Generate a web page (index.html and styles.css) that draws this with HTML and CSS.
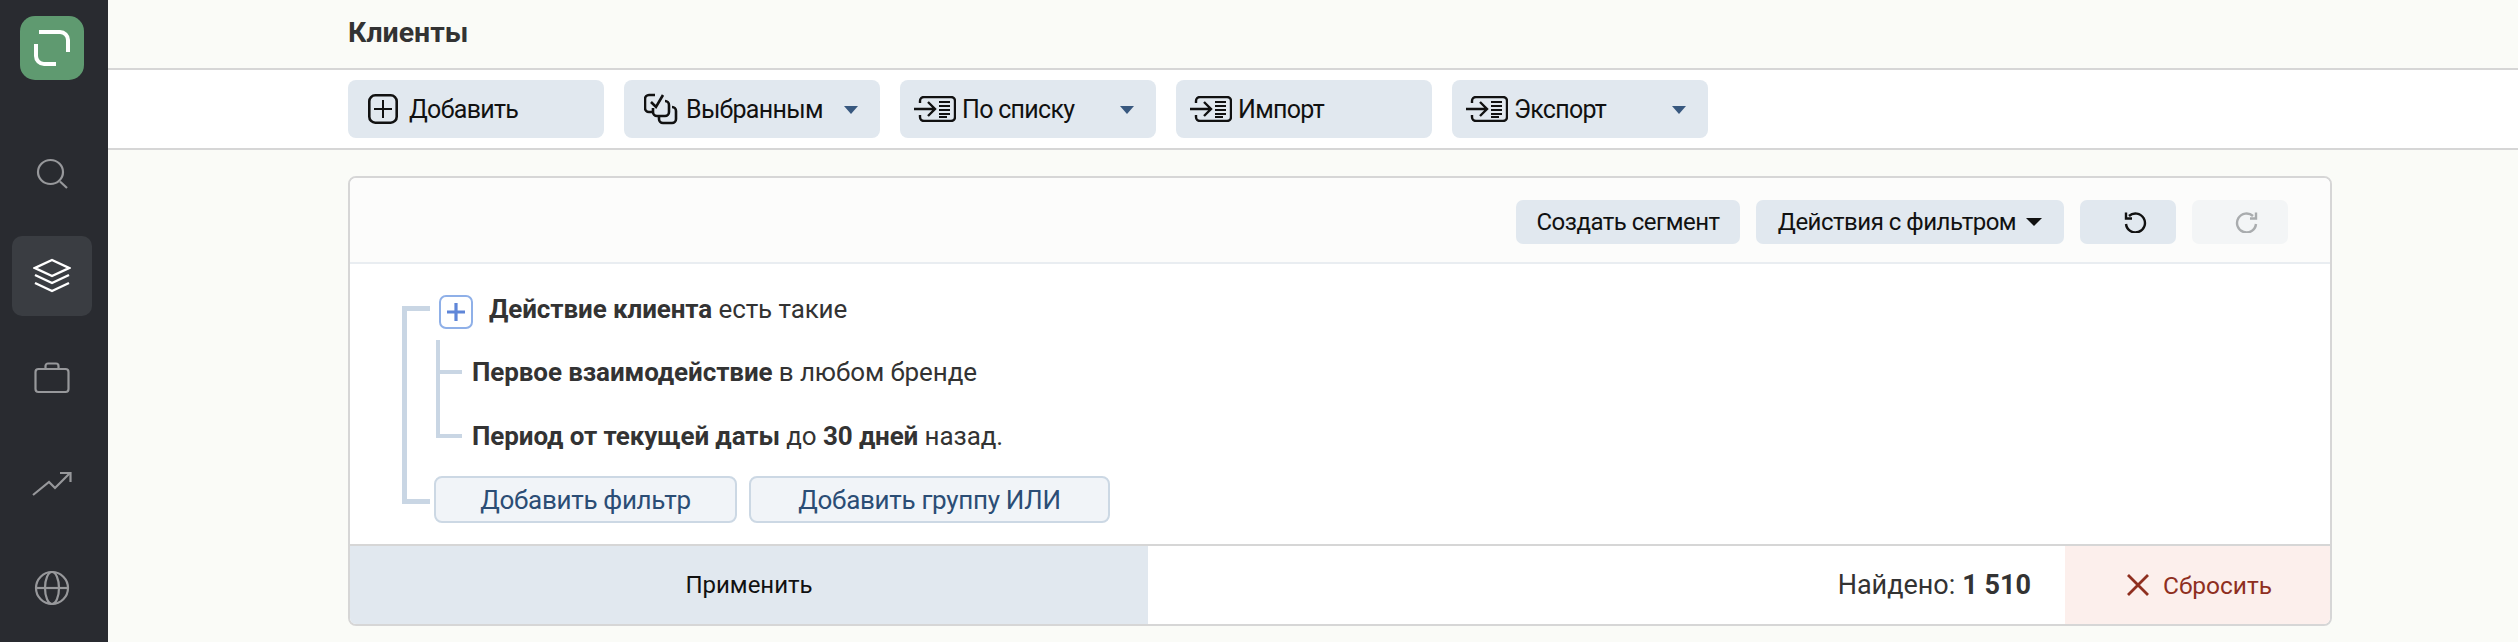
FILE: index.html
```html
<!DOCTYPE html>
<html lang="ru">
<head>
  <meta charset="UTF-8">
  <title>Клиенты</title>
  <link rel="stylesheet" href="styles.css">
</head>
<body>
<div class="app">
  <nav class="side-menu">
    <div class="side-logo">
      <svg width="40" height="36" viewBox="0 0 40 36" fill="none" stroke="#fff" stroke-width="4">
        <path d="M7 2H28a8 8 0 0 1 8 8V22"/>
        <path d="M4 14V26a8 8 0 0 0 8 8H24"/>
      </svg>
    </div>
    <a class="side-item">
      <svg width="34" height="34" viewBox="0 0 34 34" fill="none" stroke="#97989b" stroke-width="2.2">
        <ellipse cx="15.5" cy="14" rx="12.5" ry="12"/>
        <path d="M25 23.5l7 6.5"/>
      </svg>
    </a>
    <a class="side-item side-item-active">
      <svg width="38" height="36" viewBox="0 0 38 36" fill="none" stroke="#fff" stroke-width="2.4">
        <path d="M19 2L36 10 19 18 2 10Z"/>
        <path d="M2 17L19 25 36 17"/>
        <path d="M2 25L19 33 36 25"/>
      </svg>
    </a>
    <a class="side-item">
      <svg width="36" height="32" viewBox="0 0 36 32" fill="none" stroke="#97989b" stroke-width="2.2">
        <rect x="1.5" y="7" width="33" height="23" rx="3"/>
        <path d="M11.5 7V4a2.500 2.500 0 0 1 2.500-2.500h8a2.500 2.500 0 0 1 2.500 2.500V7"/>
      </svg>
    </a>
    <a class="side-item side-item-trend">
      <svg width="40" height="26" viewBox="0 0 40 26" fill="none" stroke="#97989b" stroke-width="2.2">
        <path d="M1 24L17 11 23 17 38 2"/>
        <path d="M28 2H38.500V11"/>
      </svg>
    </a>
    <a class="side-item side-item-globe">
      <svg width="36" height="36" viewBox="0 0 36 36" fill="none" stroke="#97989b" stroke-width="2.2">
        <circle cx="18" cy="18" r="16"/>
        <ellipse cx="18" cy="18" rx="7" ry="16"/>
        <path d="M2 18H34"/>
      </svg>
    </a>
  </nav>

  <main class="content">
    <header class="page-header"><h1 class="page-title">Клиенты</h1></header>

    <div class="toolbar">
      <button class="tool-btn">
        <svg class="tool-icon" width="30" height="30" viewBox="0 0 30 30" fill="none" stroke="#111" stroke-width="2.600">
          <rect x="1.300" y="1.300" width="27.400" height="27.400" rx="6"/>
          <path d="M15 6V24M6 15H24" stroke-width="2"/>
        </svg>
        <span class="tool-label">Добавить</span>
      </button>
      <button class="tool-btn">
        <svg class="tool-icon tool-icon-check" width="34" height="32" viewBox="0 0 34 32" fill="none" stroke="#111" stroke-width="2.600">
          <path d="M9 19H5a4 4 0 0 1-4-4V6a4 4 0 0 1 4-4H11"/>
          <path d="M7 9l5 5 7-12"/>
          <path d="M21 8a4 4 0 0 1 4 4V19a4 4 0 0 1-4 4H13a4 4 0 0 1-4-4V15"/>
          <path d="M28 14a4 4 0 0 1 4 4V26a4 4 0 0 1-4 4H19a4 4 0 0 1-4-4V24"/>
        </svg>
        <span class="tool-label">Выбранным</span>
        <span class="caret"></span>
      </button>
      <button class="tool-btn tool-btn-wide-icon">
        <svg class="tool-icon" width="42" height="26" viewBox="0 0 42 26" fill="none" stroke="#111" stroke-width="2.400">
          <path d="M6 7V5a4 4 0 0 1 4-4H37a4 4 0 0 1 4 4V21a4 4 0 0 1-4 4H10a4 4 0 0 1-4-4V19"/>
          <path d="M0 13H20M14 6l7 7-7 7"/>
          <path d="M25 6H36M25 10H36M25 14H36M25 18H36M25 21H33" stroke-width="1.800"/>
        </svg>
        <span class="tool-label">По списку</span>
        <span class="caret"></span>
      </button>
      <button class="tool-btn tool-btn-wide-icon">
        <svg class="tool-icon" width="42" height="26" viewBox="0 0 42 26" fill="none" stroke="#111" stroke-width="2.400">
          <path d="M6 7V5a4 4 0 0 1 4-4H37a4 4 0 0 1 4 4V21a4 4 0 0 1-4 4H10a4 4 0 0 1-4-4V19"/>
          <path d="M0 13H20M14 6l7 7-7 7"/>
          <path d="M25 6H36M25 10H36M25 14H36M25 18H36M25 21H33" stroke-width="1.800"/>
        </svg>
        <span class="tool-label">Импорт</span>
      </button>
      <button class="tool-btn tool-btn-wide-icon">
        <svg class="tool-icon" width="42" height="26" viewBox="0 0 42 26" fill="none" stroke="#111" stroke-width="2.400">
          <path d="M6 7V5a4 4 0 0 1 4-4H37a4 4 0 0 1 4 4V21a4 4 0 0 1-4 4H10a4 4 0 0 1-4-4V19"/>
          <path d="M0 13H20M14 6l7 7-7 7"/>
          <path d="M25 6H36M25 10H36M25 14H36M25 18H36M25 21H33" stroke-width="1.800"/>
        </svg>
        <span class="tool-label">Экспорт</span>
        <span class="caret"></span>
      </button>
    </div>

    <section class="filter-card">
      <div class="filter-top">
        <button class="top-btn top-btn-segment">Создать сегмент</button>
        <button class="top-btn top-btn-actions">Действия с фильтром <span class="caret caret-dark"></span></button>
        <button class="top-btn top-btn-icon">
          <svg width="24" height="22" viewBox="0 0 24 22" fill="none" stroke="#111" stroke-width="2.400">
            <path d="M6 5A9.500 9.500 0 1 1 3 13"/>
            <path d="M3 1.500V7.500H9"/>
          </svg>
        </button>
        <button class="top-btn top-btn-icon top-btn-off">
          <svg width="24" height="22" viewBox="0 0 24 22" fill="none" stroke="#a9acae" stroke-width="2.400">
            <path d="M18 5A9.500 9.500 0 1 0 21 13"/>
            <path d="M21 1.500V7.500H15"/>
          </svg>
        </button>
      </div>

      <div class="filter-tree">
        <div class="group-bracket"></div>
        <div class="tree-head">
          <span class="plus-box">
            <svg width="20" height="20" viewBox="0 0 20 20" fill="none" stroke="#5f86d8" stroke-width="3.200"><path d="M10 1V19M1 10H19"/></svg>
          </span>
          <span class="tree-text tree-text-head"><b>Действие клиента</b> есть такие</span>
        </div>
        <ul class="tree-list">
          <li class="tree-row"><span class="tree-text"><b>Первое взаимодействие</b> в любом бренде</span></li>
          <li class="tree-row"><span class="tree-text"><b>Период от текущей даты</b> до <b>30 дней</b> назад.</span></li>
        </ul>
        <div class="tree-actions">
          <button class="add-btn add-btn-filter">Добавить фильтр</button>
          <button class="add-btn add-btn-group">Добавить группу ИЛИ</button>
        </div>
      </div>

      <div class="filter-foot">
        <button class="apply-btn">Применить</button>
        <div class="found">Найдено: <b>1 510</b></div>
        <button class="reset-btn">
          <svg width="24" height="24" viewBox="0 0 24 24" fill="none" stroke="#8f2f1f" stroke-width="2.800"><path d="M2 2L22 22M22 2L2 22"/></svg>
          Сбросить
        </button>
      </div>
    </section>
  </main>
</div>
</body>
</html>
```

FILE: styles.css
```css
* {
  box-sizing: border-box;
}

html, body {
  margin: 0;
  height: 100%;
}

body {
  font-family: Roboto, "Noto Sans", sans-serif;
  font-size: 26px;
  color: #333;
  background-color: #fafbf7;
  overflow: hidden;
}

button {
  font-family: inherit;
  border: 0;
  padding: 0;
}

.app {
  display: flex;
  height: 642px;
}

/* side menu */
.side-menu {
  width: 108px;
  flex: none;
  background-color: #292b30;
  display: flex;
  flex-direction: column;
  align-items: center;
  padding: 16px 4px 0 0;
}

.side-logo {
  flex: none;
  width: 64px;
  height: 64px;
  border-radius: 15px;
  background-color: #5f9a70;
  display: flex;
  align-items: center;
  justify-content: center;
  margin-bottom: 55px;
}

.side-item {
  flex: none;
  width: 80px;
  height: 80px;
  border-radius: 10px;
  display: flex;
  align-items: center;
  justify-content: center;
  margin-bottom: 22px;
}

.side-item-active {
  background-color: #3a3d42;
  margin-top: -1px;
}

.side-item-trend {
  margin-top: 4px;
}

.side-item-globe {
  margin-top: 2px;
}

/* header and toolbar */
.content {
  flex: 1;
  min-width: 0;
}

.page-header {
  height: 70px;
  padding: 14px 0 0 240px;
  border-bottom: 2px solid #d6d6d6;
}

.page-title {
  margin: 0;
  font-size: 28.5px;
  line-height: 38px;
  font-weight: 700;
}

.toolbar {
  height: 80px;
  padding: 10px 0 0 240px;
  display: flex;
  gap: 20px;
  background-color: #fff;
  border-bottom: 2px solid #d6d6d6;
}

.tool-btn {
  width: 256px;
  height: 58px;
  border-radius: 8px;
  background-color: #e1e8ef;
  color: #111;
  display: flex;
  align-items: center;
  padding: 0 20px;
  position: relative;
  font-size: 25px;
  letter-spacing: -0.7px;
}

.tool-btn-wide-icon {
  padding: 0 14px;
}

.tool-icon {
  flex: none;
  margin-right: 11px;
}

.tool-icon-check {
  margin-right: 8px;
}

.tool-btn-wide-icon .tool-icon {
  margin-right: 6px;
}

.caret {
  width: 0;
  height: 0;
  border-left: 7px solid transparent;
  border-right: 7px solid transparent;
  border-top: 8px solid #38587f;
  position: absolute;
  right: 22px;
  top: 26px;
}

.caret-dark {
  position: static;
  display: inline-block;
  border-left-width: 8px;
  border-right-width: 8px;
  border-top-color: #111;
  margin-left: 4px;
  vertical-align: 3px;
}

/* filter card */
.filter-card {
  width: 1984px;
  margin: 26px 0 0 240px;
  height: 450px;
  background-color: #fff;
  border: 2px solid #d6d6d6;
  border-radius: 8px;
  display: flex;
  flex-direction: column;
  overflow: hidden;
}

.filter-top {
  height: 86px;
  flex: none;
  background-color: #fcfcfb;
  border-bottom: 2px solid #e9edf1;
  padding: 22px 0 0 1166px;
  display: flex;
  gap: 16px;
}

.top-btn {
  height: 44px;
  border-radius: 7px;
  background-color: #e1e8ef;
  color: #111;
  font-size: 24px;
  letter-spacing: -0.5px;
  display: flex;
  align-items: center;
  justify-content: center;
}

.top-btn-segment {
  width: 224px;
}

.top-btn-actions {
  width: 308px;
  gap: 6px;
}

.top-btn-icon {
  width: 96px;
  padding-left: 14px;
}

.top-btn-off {
  background-color: #f3f5f6;
}

/* tree */
.filter-tree {
  flex: 1;
  position: relative;
  padding: 31px 0 0 89px;
}

.group-bracket {
  position: absolute;
  left: 52px;
  top: 42px;
  width: 28px;
  height: 198px;
  border: 5px solid #c9d6e4;
  border-right: 0;
}

.tree-head {
  display: flex;
  align-items: center;
  height: 34px;
}

.plus-box {
  width: 34px;
  height: 34px;
  border: 2px solid #8fb0e8;
  border-radius: 7px;
  display: flex;
  align-items: center;
  justify-content: center;
  margin-right: 16px;
}

.tree-text {
  font-size: 26px;
  letter-spacing: -0.1px;
  color: #333;
}

.tree-text-head {
  margin-top: -6px;
}

.tree-text b {
  font-weight: 700;
}

.tree-list {
  list-style: none;
  margin: 11px 0 0 -3px;
  padding: 0;
  border-left: 4px solid #c9d6e4;
  height: 98px;
}

.tree-row {
  display: flex;
  align-items: center;
  height: 64px;
}

.tree-row::before {
  content: "";
  width: 22px;
  height: 4px;
  background-color: #c9d6e4;
  margin-right: 10px;
}

.tree-actions {
  display: flex;
  gap: 12px;
  margin: 38px 0 0 -5px;
}

.add-btn {
  height: 47px;
  background-color: #f1f4f8;
  border: 2px solid #ccd8e4;
  border-radius: 8px;
  color: #2b4d75;
  font-size: 26px;
  letter-spacing: -0.3px;
}

.add-btn-filter {
  width: 303px;
}

.add-btn-group {
  width: 361px;
}

/* footer */
.filter-foot {
  height: 80px;
  flex: none;
  border-top: 2px solid #d6d6d6;
  display: flex;
  align-items: stretch;
}

.apply-btn {
  width: 798px;
  background-color: #e1e8ef;
  color: #111;
  font-size: 24px;
}

.found {
  flex: 1;
  display: flex;
  align-items: center;
  justify-content: flex-end;
  gap: 7px;
  padding-right: 34px;
  font-size: 27px;
}

.reset-btn {
  width: 265px;
  padding-left: 3px;
  background-color: #fcefec;
  color: #8f2f1f;
  font-size: 24.5px;
  display: flex;
  align-items: center;
  justify-content: center;
  gap: 13px;
}
```
